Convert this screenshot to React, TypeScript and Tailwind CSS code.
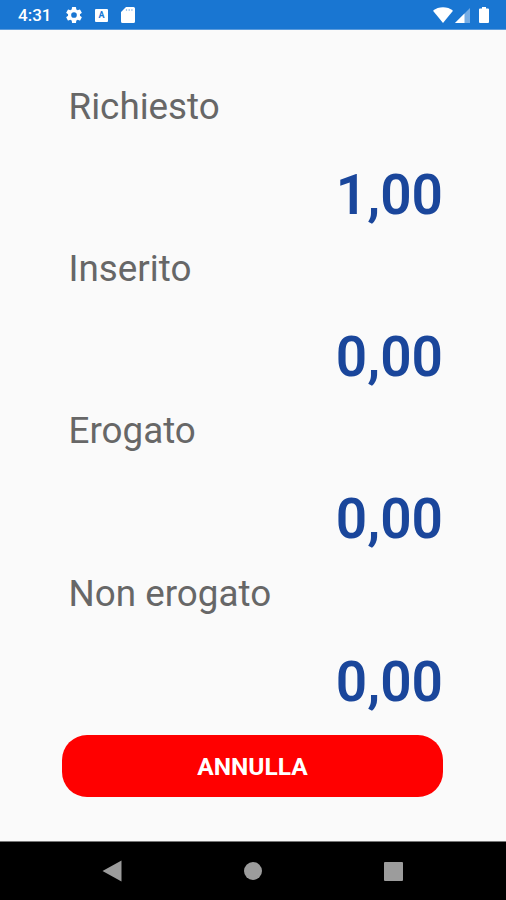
import React from 'react';

interface Amount {
  id: string;
  label: string;
  value: string;
}

const AMOUNTS: Amount[] = [
  { id: 'requested', label: 'Richiesto', value: '1,00' },
  { id: 'inserted', label: 'Inserito', value: '0,00' },
  { id: 'dispensed', label: 'Erogato', value: '0,00' },
  { id: 'not_dispensed', label: 'Non erogato', value: '0,00' },
];

const StatusBar: React.FC = () => (
  <header className="flex h-[30px] shrink-0 items-center border-b border-[#5b9bdc] bg-[#1976d2] pl-[18px] pr-[17px] pt-px text-white">
    <span className="w-[46px] pt-px text-[17px] font-medium leading-none">4:31</span>
    <svg className="h-[20px] w-[20px]" viewBox="0 0 24 24" fill="currentColor">
      <path d="M19.14 12.94c.04-.3.06-.61.06-.94s-.02-.64-.07-.94l2.03-1.58a.49.49 0 0 0 .12-.61l-1.92-3.32a.49.49 0 0 0-.59-.22l-2.39.96a7 7 0 0 0-1.62-.94l-.36-2.54a.48.48 0 0 0-.48-.41h-3.84a.48.48 0 0 0-.47.41l-.36 2.54c-.59.24-1.13.57-1.62.94l-2.39-.96a.48.48 0 0 0-.59.22L2.74 8.87a.48.48 0 0 0 .12.61l2.03 1.58a6 6 0 0 0 0 1.88l-2.03 1.58a.49.49 0 0 0-.12.61l1.92 3.32c.12.22.37.29.59.22l2.39-.96c.5.38 1.03.7 1.62.94l.36 2.54c.05.24.24.41.48.41h3.84c.24 0 .44-.17.47-.41l.36-2.54a7 7 0 0 0 1.62-.94l2.39.96c.22.08.47 0 .59-.22l1.92-3.32a.48.48 0 0 0-.12-.61zM12 15.4a3.4 3.4 0 1 1 0-6.8 3.4 3.4 0 0 1 0 6.8z" />
    </svg>
    <span className="ml-[11px] flex h-[13px] w-[13px] items-center justify-center rounded-[1px] bg-white text-[9px] font-bold leading-none text-[#1976d2]">A</span>
    <svg className="ml-[13px] h-4 w-[14px]" viewBox="0 0 14 16" fill="currentColor">
      <path d="M5 0h7.500A1.500 1.500 0 0 1 14 1.500v13a1.500 1.500 0 0 1-1.500 1.500h-11A1.500 1.500 0 0 1 0 14.500V5z" />
      <path d="M5.500 2v2M8.200 2v2M10.900 2v2" stroke="#1976d2" strokeWidth="1.200" opacity=".4" />
    </svg>
    <svg className="ml-auto h-4 w-5" viewBox="0 0 20 16" fill="currentColor">
      <path d="M0 3.700C5.500-.9 14.500-.9 20 3.700L10 16z" />
    </svg>
    <svg className="ml-[2px] h-[15px] w-[15px]" viewBox="0 0 15 15" fill="currentColor">
      <path d="M15 0v15H0z" opacity=".4" />
      <path d="M9.500 5.500V15H0z" />
    </svg>
    <svg className="ml-[9px] h-4 w-[10px]" viewBox="0 0 10 16" fill="currentColor">
      <path d="M3 0h4v1.600h2a1 1 0 0 1 1 1V15a1 1 0 0 1-1 1H1a1 1 0 0 1-1-1V2.600a1 1 0 0 1 1-1h2z" />
    </svg>
  </header>
);

const NavigationBar: React.FC = () => (
  <nav className="grid h-[59px] shrink-0 grid-cols-[224px_58px_224px] items-center border-t border-[#777] bg-black text-[#9c9c9c]">
    <svg className="ml-[102px] h-[22px] w-[20px]" viewBox="0 0 20 22" fill="currentColor">
      <path d="M0.500 11 19.500 .5v21z" />
    </svg>
    <span className="mx-auto h-[18px] w-[18px] rounded-full bg-[#9c9c9c]" />
    <span className="ml-[102px] h-[19px] w-[19px] rounded-[1px] bg-[#9c9c9c]" />
  </nav>
);

const App: React.FC = () => {
  return (
    <div className="flex h-[900px] w-[506px] flex-col overflow-hidden bg-[#fafafa] font-['Roboto',sans-serif]">
      <StatusBar />
      <main className="flex grow flex-col px-[62px] pt-[31.500px]">
        {AMOUNTS.map((amount) => (
          <section key={amount.id} className="h-[162.400px] shrink-0">
            <p className="h-[101px] pl-[6.500px] pt-[23px] text-[36.800px] leading-[44px] text-[#676767]">{amount.label}</p>
            <p className="pr-px text-right text-[55px] font-semibold leading-[64px] text-[#1a469b]">{amount.value}</p>
          </section>
        ))}
        <button className="mt-[24px] h-[61.500px] w-[381px] shrink-0 rounded-[25px] bg-[#ff0000] pt-[4px] text-[24.500px] font-bold text-white">
          ANNULLA
        </button>
      </main>
      <NavigationBar />
    </div>
  );
};

export default App;
